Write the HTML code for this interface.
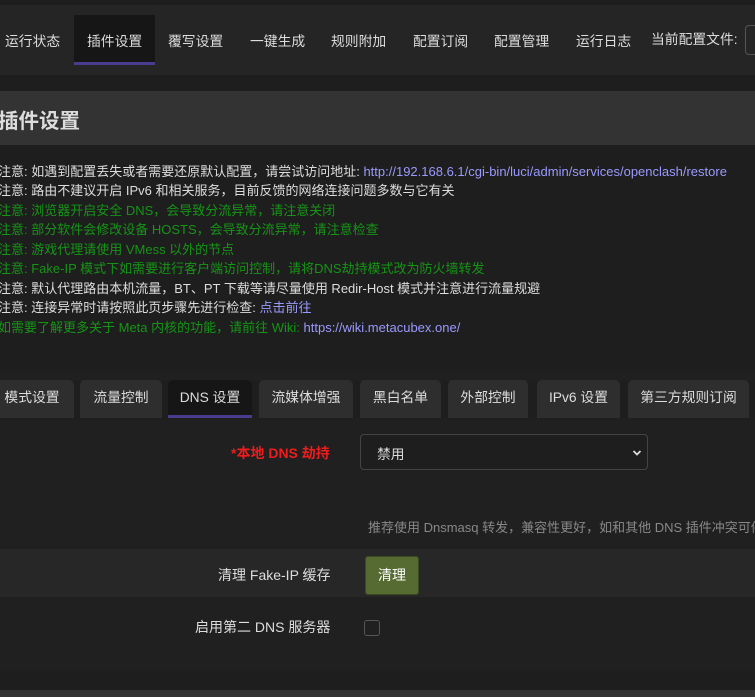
<!DOCTYPE html>
<html><head><meta charset="utf-8"><style>
*{margin:0;padding:0;box-sizing:border-box}
body{width:755px;height:697px;overflow:hidden;background:#1e1e1e;font-family:"Liberation Sans","Noto Sans CJK SC",sans-serif;font-size:13.5px;color:#ddd;position:relative}
.abs{position:absolute;white-space:nowrap}
.nav{position:absolute;left:0;top:5px;width:755px;height:70px;background:#252525}
.nav span{position:absolute;top:25px;font-size:13.8px;color:#ddd}
.act{position:absolute;left:74px;top:10px;width:81px;height:50px;background:#161616;border-bottom:3px solid #4b3b8f}
.head{position:absolute;left:0;top:91px;width:755px;height:54px;background:#333}
.notes div{position:absolute;left:-2px;font-size:13px;white-space:nowrap}
.w{color:#ddd}.g{color:#169416}.b{color:#9a9aff}
.tab{position:absolute;top:380px;height:38px;background:#2e2e2e;border-radius:5px 5px 0 0;font-size:13.8px;color:#ddd;text-align:center;line-height:36px}
.panel{position:absolute;left:0;top:419px;width:755px;height:252px;background:#202020}
</style></head><body>
<div class="nav">
<div class="act"></div>
<span style="left:5px">运行状态</span>
<span style="left:87px">插件设置</span>
<span style="left:168px">覆写设置</span>
<span style="left:250px">一键生成</span>
<span style="left:331px">规则附加</span>
<span style="left:413px">配置订阅</span>
<span style="left:494px">配置管理</span>
<span style="left:576px">运行日志</span>
<span style="left:651px;top:23px">当前配置文件:</span>
<div style="position:absolute;left:745px;top:20px;width:20px;height:30px;border:1px solid #555;border-radius:4px"></div>
</div>
<div class="head"><div class="abs" style="left:-2px;top:13px;font-size:20.5px;font-weight:bold;color:#ddd">插件设置</div></div>
<div class="notes">
<div class="w" style="top:161px">注意: 如遇到配置丢失或者需要还原默认配置，请尝试访问地址: <span class="b">http://192.168.6.1/cgi-bin/luci/admin/services/openclash/restore</span></div>
<div class="w" style="top:180px">注意: 路由不建议开启 IPv6 和相关服务，目前反馈的网络连接问题多数与它有关</div>
<div class="g" style="top:200px">注意: 浏览器开启安全 DNS，会导致分流异常，请注意关闭</div>
<div class="g" style="top:219px">注意: 部分软件会修改设备 HOSTS，会导致分流异常，请注意检查</div>
<div class="g" style="top:239px">注意: 游戏代理请使用 VMess 以外的节点</div>
<div class="g" style="top:258px">注意: Fake-IP 模式下如需要进行客户端访问控制，请将DNS劫持模式改为防火墙转发</div>
<div class="w" style="top:278px">注意: 默认代理路由本机流量，BT、PT 下载等请尽量使用 Redir-Host 模式并注意进行流量规避</div>
<div class="w" style="top:297px">注意: 连接异常时请按照此页步骤先进行检查: <span class="b">点击前往</span></div>
<div class="g" style="top:317px">如需要了解更多关于 Meta 内核的功能，请前往 Wiki: <span class="b">https://wiki.metacubex.one/</span></div>
</div>
<div class="abs" style="left:0;top:371px;width:755px;height:10px;background:#202020"></div>
<div class="tab" style="left:-10px;width:84px;padding-left:0">模式设置</div>
<div class="tab" style="left:80px;width:82px">流量控制</div>
<div class="tab" style="left:168px;width:84px;background:#161616;border-bottom:3px solid #4b3b8f">DNS 设置</div>
<div class="tab" style="left:259px;width:94px">流媒体增强</div>
<div class="tab" style="left:360px;width:81px">黑白名单</div>
<div class="tab" style="left:448px;width:80px">外部控制</div>
<div class="tab" style="left:537px;width:83px">IPv6 设置</div>
<div class="tab" style="left:628px;width:121px">第三方规则订阅</div>
<div class="panel"></div>
<div class="abs" style="left:231px;top:443px;color:#ee1c1c;font-weight:bold;font-size:14px">*本地 DNS 劫持</div>
<div class="abs" style="left:360px;top:434px;width:288px;height:36px;border:1px solid #444;border-radius:4px;background:#1e1e1e">
<span style="position:absolute;left:16px;top:8px;font-size:13.8px">禁用</span>
<svg style="position:absolute;right:5px;top:14px" width="10" height="8" viewBox="0 0 10 8"><path d="M1.5 2l3.5 3.5L8.5 2" stroke="#ddd" stroke-width="1.8" fill="none"/></svg>
</div>
<div class="abs" style="left:368px;top:517px;color:#888;font-size:13px">推荐使用 Dnsmasq 转发，兼容性更好，如和其他 DNS 插件冲突可停</div>
<div class="abs" style="left:0;top:549px;width:755px;height:48px;background:#272727"></div>
<div class="abs" style="left:218px;top:565px;color:#ddd;font-size:14px">清理 Fake-IP 缓存</div>
<div class="abs" style="left:365px;top:556px;width:54px;height:39px;background:#566b32;border:1px solid #3a4a22;border-radius:3px;color:#fff;text-align:center;line-height:37px;font-size:14px">清理</div>
<div class="abs" style="left:195px;top:617px;color:#ddd;font-size:14px">启用第二 DNS 服务器</div>
<div class="abs" style="left:364px;top:620px;width:16px;height:16px;border:1px solid #555;border-radius:3px"></div>
<div class="abs" style="left:0;top:690px;width:755px;height:7px;background:#333"></div>
</body></html>
